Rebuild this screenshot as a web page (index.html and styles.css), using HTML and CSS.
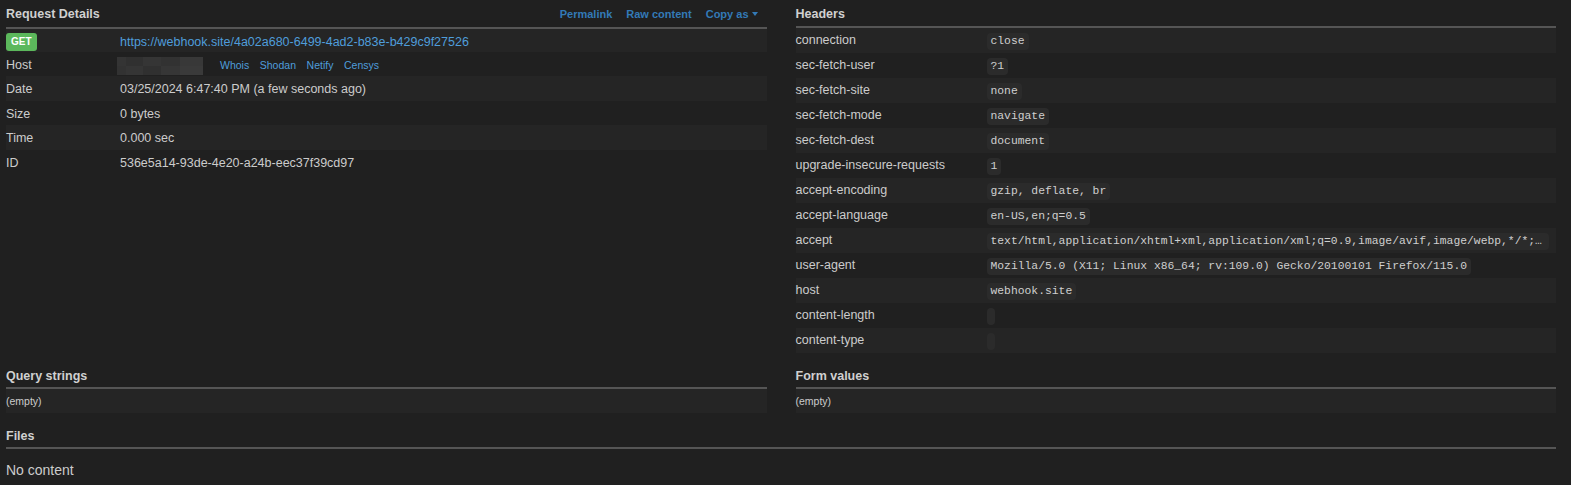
FILE: index.html
```html
<!DOCTYPE html>
<html lang="en">
<head>
<meta charset="utf-8">
<title>Request Details</title>
<link rel="stylesheet" href="styles.css">
</head>
<body>
<div class="page">
  <div class="grid">
    <section class="panel">
      <div class="panel-head tall">
        <h3 class="title">Request Details</h3>
        <div class="actions">
          <a class="action">Permalink</a>
          <a class="action">Raw content</a>
          <a class="action">Copy as<span class="caret"></span></a>
        </div>
      </div>
      <div class="req-table">
        <div class="req-row first striped">
          <div class="req-label"><span class="badge">GET</span></div>
          <div class="req-value"><a class="link">https://webhook.site/4a02a680-6499-4ad2-b83e-b429c9f27526</a></div>
        </div>
        <div class="req-row">
          <div class="req-label">Host</div>
          <div class="req-value host">
            <svg class="blur" width="86" height="18" viewBox="0 0 86 18">
              <rect x="0" y="0" width="9" height="9" fill="#343434"/>
              <rect x="9" y="0" width="17" height="9" fill="#303030"/>
              <rect x="26" y="0" width="18" height="9" fill="#353535"/>
              <rect x="44" y="0" width="19" height="9" fill="#323232"/>
              <rect x="63" y="0" width="23" height="9" fill="#383838"/>
              <rect x="0" y="9" width="9" height="9" fill="#323232"/>
              <rect x="9" y="9" width="17" height="9" fill="#353535"/>
              <rect x="26" y="9" width="18" height="9" fill="#303030"/>
              <rect x="44" y="9" width="19" height="9" fill="#363636"/>
              <rect x="63" y="9" width="23" height="9" fill="#3a3a3a"/>
            </svg>
            <div class="host-links">
              <a class="small-link">Whois</a>
              <a class="small-link">Shodan</a>
              <a class="small-link">Netify</a>
              <a class="small-link">Censys</a>
            </div>
          </div>
        </div>
        <div class="req-row striped">
          <div class="req-label">Date</div>
          <div class="req-value">03/25/2024 6:47:40 PM (a few seconds ago)</div>
        </div>
        <div class="req-row">
          <div class="req-label">Size</div>
          <div class="req-value">0 bytes</div>
        </div>
        <div class="req-row striped">
          <div class="req-label">Time</div>
          <div class="req-value">0.000 sec</div>
        </div>
        <div class="req-row">
          <div class="req-label">ID</div>
          <div class="req-value">536e5a14-93de-4e20-a24b-eec37f39cd97</div>
        </div>
      </div>
    </section>

    <section class="panel">
      <div class="panel-head right">
        <h3 class="title">Headers</h3>
      </div>
      <div class="hdr-table">
        <div class="hdr-row striped"><div class="hdr-label">connection</div><div class="hdr-value"><code class="code">close</code></div></div>
        <div class="hdr-row"><div class="hdr-label">sec-fetch-user</div><div class="hdr-value"><code class="code">?1</code></div></div>
        <div class="hdr-row striped"><div class="hdr-label">sec-fetch-site</div><div class="hdr-value"><code class="code">none</code></div></div>
        <div class="hdr-row"><div class="hdr-label">sec-fetch-mode</div><div class="hdr-value"><code class="code">navigate</code></div></div>
        <div class="hdr-row striped"><div class="hdr-label">sec-fetch-dest</div><div class="hdr-value"><code class="code">document</code></div></div>
        <div class="hdr-row"><div class="hdr-label">upgrade-insecure-requests</div><div class="hdr-value"><code class="code">1</code></div></div>
        <div class="hdr-row striped"><div class="hdr-label">accept-encoding</div><div class="hdr-value"><code class="code">gzip, deflate, br</code></div></div>
        <div class="hdr-row"><div class="hdr-label">accept-language</div><div class="hdr-value"><code class="code">en-US,en;q=0.5</code></div></div>
        <div class="hdr-row striped"><div class="hdr-label">accept</div><div class="hdr-value"><code class="code" title="text/html,application/xhtml+xml,application/xml;q=0.9,image/avif,image/webp,*/*;q=0.8">text/html,application/xhtml+xml,application/xml;q=0.9,image/avif,image/webp,*/*;q=0.8</code></div></div>
        <div class="hdr-row"><div class="hdr-label">user-agent</div><div class="hdr-value"><code class="code">Mozilla/5.0 (X11; Linux x86_64; rv:109.0) Gecko/20100101 Firefox/115.0</code></div></div>
        <div class="hdr-row striped"><div class="hdr-label">host</div><div class="hdr-value"><code class="code">webhook.site</code></div></div>
        <div class="hdr-row"><div class="hdr-label">content-length</div><div class="hdr-value"><code class="code"></code></div></div>
        <div class="hdr-row striped"><div class="hdr-label">content-type</div><div class="hdr-value"><code class="code"></code></div></div>
      </div>
    </section>

    <section class="panel">
      <div class="panel-head">
        <h3 class="title">Query strings</h3>
      </div>
      <div class="empty-row striped">(empty)</div>
    </section>

    <section class="panel">
      <div class="panel-head">
        <h3 class="title">Form values</h3>
      </div>
      <div class="empty-row striped">(empty)</div>
    </section>
  </div>

  <section class="files">
    <div class="panel-head">
      <h3 class="title">Files</h3>
    </div>
    <p class="no-content">No content</p>
  </section>
</div>
</body>
</html>
```

FILE: styles.css
```css
html, body {
  margin: 0;
  padding: 0;
  background: #202020;
}

body {
  font-family: "Liberation Sans", Arial, sans-serif;
  font-size: 12.5px;
  color: #cccccc;
}

.page {
  padding: 0 15px 0 6px;
}

.grid {
  display: grid;
  grid-template-columns: minmax(0, 1fr) minmax(0, 1fr);
  column-gap: 29px;
  row-gap: 9px;
  align-items: start;
}

.panel-head {
  display: flex;
  justify-content: space-between;
  align-items: baseline;
  box-sizing: content-box;
  height: 20px;
  padding-top: 5px;
  border-bottom: 2px solid #555555;
}

.panel-head.tall {
  height: 22px;
}

.panel-head.right {
  height: 21px;
}

.title {
  margin: 0;
  font-size: 12.5px;
  line-height: 18px;
  font-weight: bold;
  color: #d0d0d0;
}

.actions {
  display: flex;
  gap: 14px;
  padding-right: 9px;
  line-height: 18px;
}

.action {
  font-size: 11px;
  font-weight: bold;
  color: #337ab7;
  cursor: pointer;
}

.caret {
  display: inline-block;
  width: 0;
  height: 0;
  margin-left: 3px;
  vertical-align: 2px;
  border-top: 4px solid #337ab7;
  border-left: 3.5px solid transparent;
  border-right: 3.5px solid transparent;
}

/* Request details table */
.req-row {
  display: grid;
  grid-template-columns: 114px minmax(0, 1fr);
  height: 24.4px;
  box-sizing: border-box;
  padding-top: 5px;
  line-height: 17.86px;
}

.req-row.first {
  height: 23px;
  padding-top: 4px;
  line-height: 18px;
}

.striped {
  background: #252525;
}

.badge {
  display: inline-block;
  height: 18px;
  line-height: 18px;
  padding: 0 5px;
  border-radius: 3px;
  background: #5cb85c;
  color: #ffffff;
  font-size: 10px;
  font-weight: bold;
  vertical-align: top;
}

.link {
  color: #4f9ddb;
  cursor: pointer;
}

.host {
  display: flex;
  align-items: flex-start;
}

.blur {
  display: block;
  margin-left: -3px;
  flex: none;
}

.host-links {
  display: flex;
  gap: 10.6px;
  margin-left: 17px;
}

.small-link {
  font-size: 10.5px;
  color: #4f9ddb;
  cursor: pointer;
}

/* Headers table */
.hdr-row {
  display: grid;
  grid-template-columns: 191px minmax(0, 1fr);
  height: 25px;
  box-sizing: border-box;
  padding-top: 5px;
}

.hdr-label {
  line-height: 15px;
  white-space: nowrap;
}

.hdr-value {
  min-width: 0;
  padding-right: 7px;
}

.code {
  display: inline-block;
  box-sizing: border-box;
  max-width: 100%;
  height: 17px;
  line-height: 17px;
  padding: 0 4px;
  border-radius: 4px;
  background: #2b2b2b;
  color: #cfcfcf;
  font-family: "Liberation Mono", "Courier New", monospace;
  font-size: 11.35px;
  white-space: nowrap;
  overflow: hidden;
  text-overflow: ellipsis;
  vertical-align: top;
}

/* Empty rows */
.empty-row {
  height: 24px;
  box-sizing: border-box;
  padding-top: 5px;
  font-size: 10.5px;
  line-height: 15px;
}

.files {
  margin-top: 9px;
}

.no-content {
  margin: 11px 0 0;
  font-size: 14px;
  line-height: 20px;
  color: #cccccc;
}
```
